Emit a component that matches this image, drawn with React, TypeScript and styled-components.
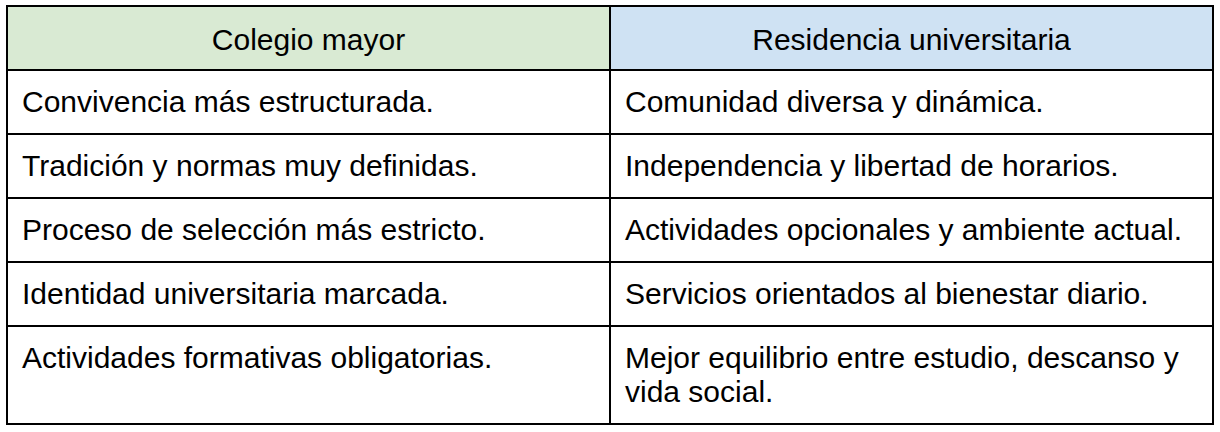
import React from 'react';
import styled, { createGlobalStyle } from 'styled-components';

const GlobalStyle = createGlobalStyle`
  html, body {
    margin: 0;
    padding: 0;
    background: #ffffff;
  }
  body {
    font-family: "Liberation Sans", Arial, Helvetica, sans-serif;
    color: #000000;
  }
`;

const Page = styled.div`
  padding: 5px 6px;
  width: 1220px;
  box-sizing: border-box;
`;

const Table = styled.table`
  width: 100%;
  border-collapse: collapse;
  table-layout: fixed;
  border: 2px solid #000;
`;

const HeadCell = styled.th<{ $tone: string }>`
  background: ${(p) => p.$tone};
  border: 2px solid #000;
  font-weight: 400;
  font-size: 30px;
  line-height: 34px;
  padding: 16px 14px 12px;
  text-align: center;
  vertical-align: middle;
`;

const Cell = styled.td`
  border: 2px solid #000;
  font-size: 30px;
  line-height: 34px;
  padding: 14px 14px;
  text-align: left;
  vertical-align: top;
`;

const rows: [string, string][] = [
    ['Convivencia más estructurada.', 'Comunidad diversa y dinámica.'],
    ['Tradición y normas muy definidas.', 'Independencia y libertad de horarios.'],
    ['Proceso de selección más estricto.', 'Actividades opcionales y ambiente actual.'],
    ['Identidad universitaria marcada.', 'Servicios orientados al bienestar diario.'],
    ['Actividades formativas obligatorias.', 'Mejor equilibrio entre estudio, descanso y vida social.'],
];

const App = () => (
    <>
        <GlobalStyle />
        <Page>
            <Table>
                <thead>
                    <tr>
                        <HeadCell $tone="#d9ead3">Colegio mayor</HeadCell>
                        <HeadCell $tone="#cfe2f3">Residencia universitaria</HeadCell>
                    </tr>
                </thead>
                <tbody>
                    {rows.map(([left, right]) => (
                        <tr key={left}>
                            <Cell>{left}</Cell>
                            <Cell>{right}</Cell>
                        </tr>
                    ))}
                </tbody>
            </Table>
        </Page>
    </>
);

export default App;
